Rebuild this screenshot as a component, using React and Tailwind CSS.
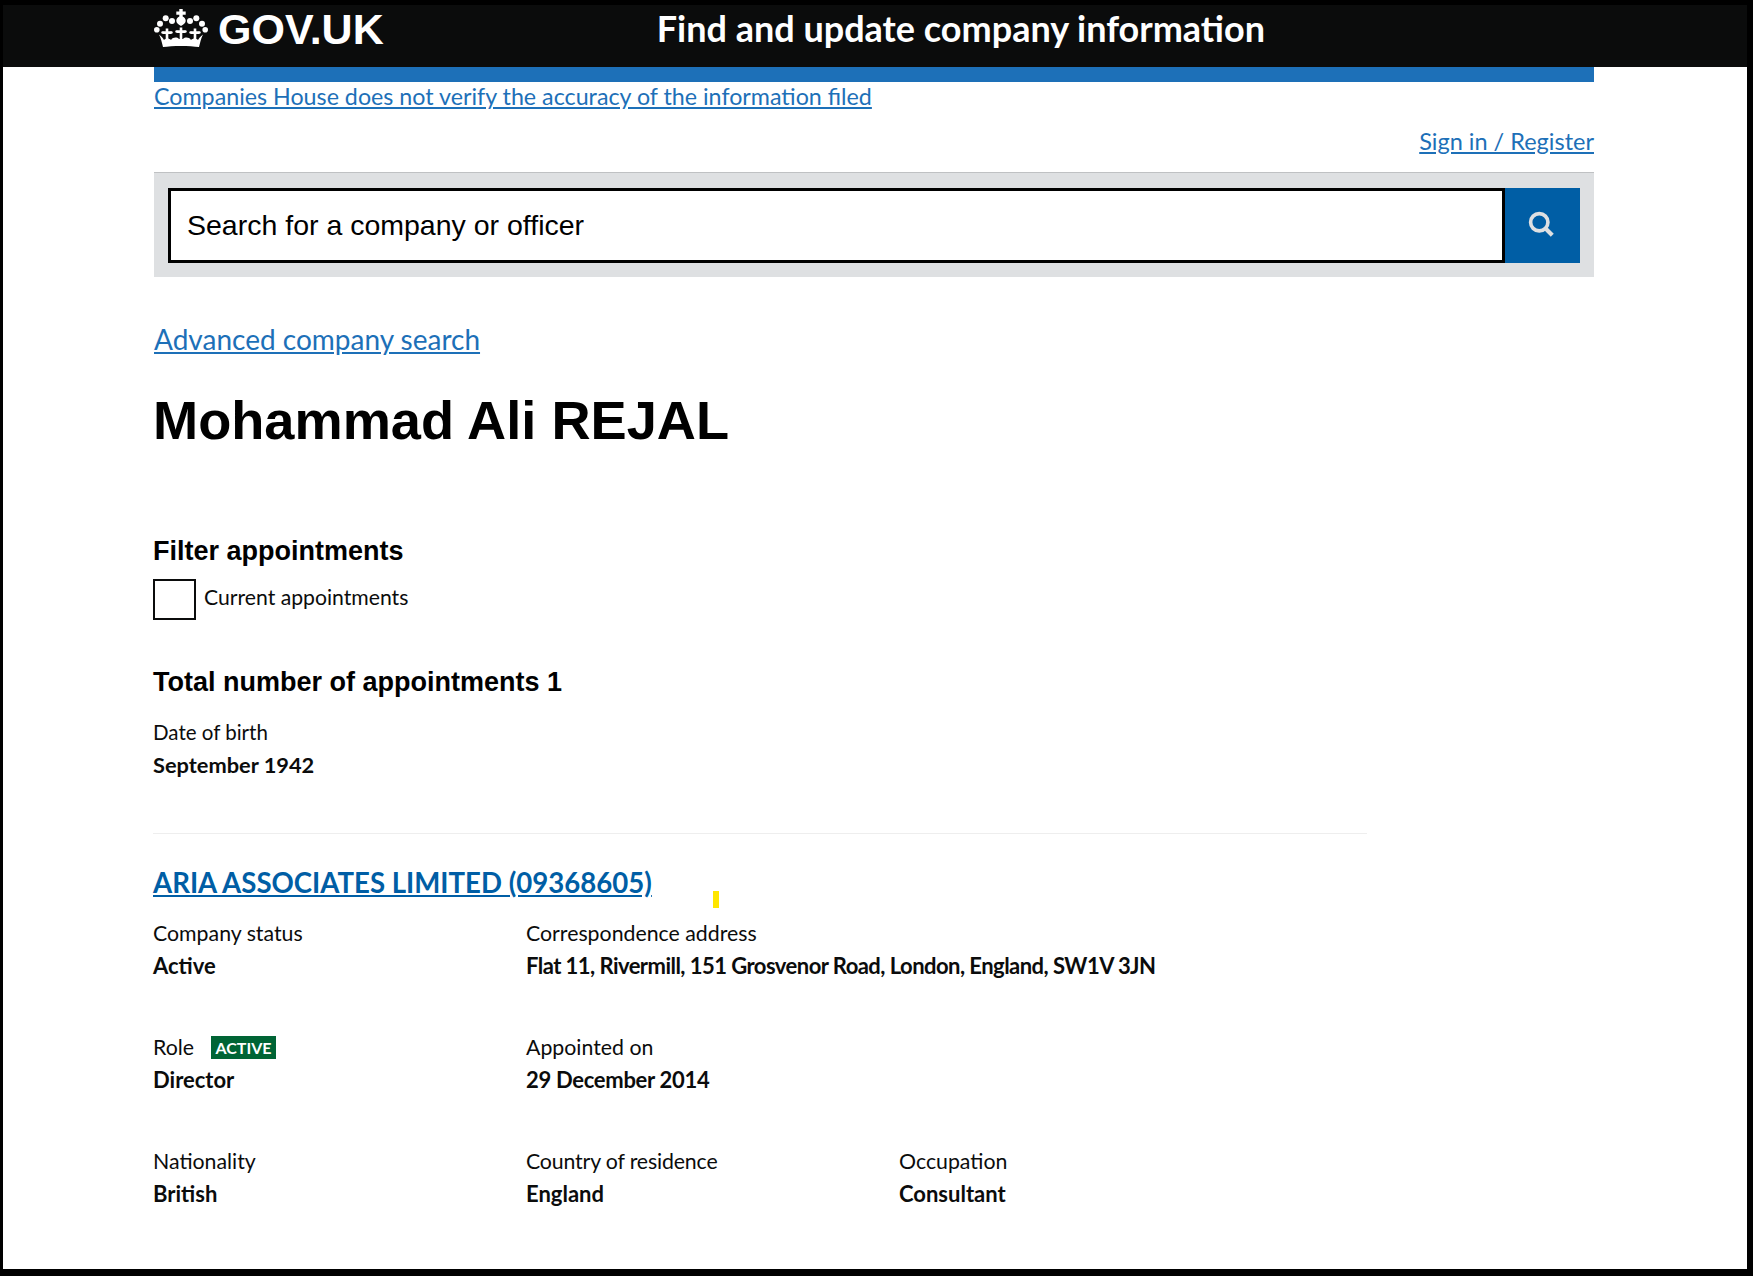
const body = { fontFamily: '"Lato", "Noto Sans", sans-serif' };
const arial = { fontFamily: '"Liberation Sans", Arial, sans-serif' };

function Fleur({ x, y }) {
  return (
    <g transform={`translate(${x} ${y})`}>
      <path d="M-1.300 -4.500h2.600v2.800h3v2.600h-3v7h-2.600v-7h-3v-2.600h3z" />
      <circle cx="-4.500" cy="-0.500" r="1.200" />
      <circle cx="4.500" cy="-0.500" r="1.200" />
    </g>
  );
}

function Crown() {
  return (
    <svg width="54" height="38" viewBox="0 0 54 38" fill="white" aria-hidden="true" className="shrink-0">
      <path d="M25.300 0h3.400v2.500h3v3.200h-3v1.800c1.800 .9 3 2.400 3 4.200 0 2-1.800 3.800-4.700 5.300-2.900-1.500-4.700-3.300-4.700-5.300 0-1.800 1.200-3.300 3-4.200V5.700h-3V2.500h3z" />
      <circle cx="18" cy="12" r="3" />
      <circle cx="36" cy="12" r="3" />
      <circle cx="11.700" cy="9.300" r="3" />
      <circle cx="42.300" cy="9.300" r="3" />
      <circle cx="6" cy="14.700" r="3" />
      <circle cx="48" cy="14.700" r="3" />
      <circle cx="2.800" cy="20.700" r="2.800" />
      <circle cx="51.200" cy="20.700" r="2.800" />
      <Fleur x={13} y={24} />
      <Fleur x={27} y={23} />
      <Fleur x={41} y={24} />
      <path d="M5 25.500C7 27 9 29 10 31c2-2 5-2 7 0 2-3 6-3 8-1h4c2-2 6-2 8 1 2-2 5-2 7 0 1-2 3-4 5-5.500-2 4-3 8.500-4 12.500-9-1.500-27-1.500-36 0-1-4-2-8.500-4-12.500z" />
    </svg>
  );
}

function Field({ label, value, labelClass = "", valueClass = "", children }) {
  return (
    <div>
      <div className={"flex items-center h-[32px] text-[21.3px] leading-[31px] text-[#0b0c0c] " + labelClass}>
        <span>{label}</span>
        {children}
      </div>
      <div className={"h-[32px] text-[22px] leading-[34px] font-bold text-[#0b0c0c] whitespace-nowrap " + valueClass}>{value}</div>
    </div>
  );
}

export default function App() {
  return (
    <div className="w-[1753px] h-[1276px] bg-white border-black border-t-[5px] border-l-[3px] border-r-[6px] border-b-[7px] overflow-hidden" style={body}>
      <header className="h-[62px] bg-[#0b0c0c] flex items-start pl-[151px] text-white">
        <div className="mt-[4px]"><Crown /></div>
        <span className="ml-[10px] -mt-[1px] text-[43px] leading-[50px] font-bold whitespace-nowrap" style={arial}>GOV.UK</span>
        <span className="ml-[273px] mt-[2px] text-[36px] leading-[42px] font-bold whitespace-nowrap">Find and update company information</span>
      </header>

      <main className="ml-[151px] w-[1440px]">
        <div className="h-[15px] bg-[#1d70b8]"></div>
        <div className="h-[30px] text-[23.25px] leading-[29px]">
          <a href="#" className="text-[#1d70b8] underline">Companies House does not verify the accuracy of the information filed</a>
        </div>
        <div className="mt-[15px] h-[30px] text-[23.5px] leading-[29px] text-right">
          <a href="#" className="text-[#1d70b8] underline">Sign in / Register</a>
        </div>
        <div className="mt-[15px] h-[105px] bg-[#dee0e2] border-t border-[#bfc1c3] px-[14px] pt-[15px] flex">
          <div className="flex-1 h-[75px] bg-white border-[3px] border-black pl-[16px] pb-[1px] flex items-center text-[28.5px] text-black" style={arial}>Search for a company or officer</div>
          <div className="w-[75px] h-[75px] bg-[#005ea5] flex items-center justify-center">
            <svg width="26" height="26" viewBox="0 0 30 30" fill="none" stroke="#dee0e2" aria-hidden="true" className="-mt-[3px] -ml-[3px]">
              <circle cx="13" cy="13" r="10" strokeWidth="4.200" />
              <path d="M20 20L28 28" strokeWidth="4.800" />
            </svg>
          </div>
        </div>

        <div className="mt-[43px] h-[40px] text-[28px] leading-[38px]">
          <a href="#" className="text-[#1d70b8] underline">Advanced company search</a>
        </div>
        <h1 className="mt-[31px] h-[60px] text-[54.2px] leading-[58px] font-bold text-black -ml-[1px]" style={arial}>Mohammad Ali REJAL</h1>

        <h2 className="mt-[85px] h-[30px] text-[27px] leading-[30px] font-bold text-black -ml-[1px]" style={arial}>Filter appointments</h2>
        <label className="mt-[13px] h-[41px] flex items-center">
          <span className="w-[43px] h-[41px] border-[2px] border-[#0b0c0c] -ml-[1px] bg-white"></span>
          <span className="ml-[8px] text-[21.2px] leading-[32px] text-[#0b0c0c] -mt-[6px]">Current appointments</span>
        </label>
        <h2 className="mt-[47px] h-[30px] text-[27px] leading-[30px] font-bold text-black -ml-[1px]" style={arial}>Total number of appointments 1</h2>

        <div className="-ml-[1px]">
          <div className="mt-[20px] h-[32px] text-[20.5px] leading-[31px] text-[#0b0c0c]">Date of birth</div>
          <div className="h-[32px] text-[21.8px] leading-[32px] font-bold text-[#0b0c0c]">September 1942</div>
          <div className="mt-[52px] mb-[1px] w-[1214px] h-px bg-[#eeeeee]"></div>
          <div className="relative mt-[30px] h-[36px] text-[27.6px] leading-[37px] font-bold">
            <a href="#" className="text-[#005ea5] underline">ARIA ASSOCIATES LIMITED (09368605)</a>
            <span className="absolute left-[560px] top-[27px] w-[6px] h-[17px] bg-[#ffe600]"></span>
          </div>
          <div className="mt-[17px] grid grid-cols-[373px_373px_1fr] gap-y-[50px]">
            <Field label="Company status" value="Active" />
            <div className="col-span-2"><Field label="Correspondence address" value="Flat 11, Rivermill, 151 Grosvenor Road, London, England, SW1V 3JN" valueClass="tracking-[-0.54px]" /></div>
            <Field label="Role" value="Director">
              <span className="ml-[17px] w-[65px] h-[23px] bg-[#006435] text-white text-[16px] leading-[23px] font-bold text-center">ACTIVE</span>
            </Field>
            <div className="col-span-2"><Field label="Appointed on" value="29 December 2014" valueClass="tracking-[-0.3px]" /></div>
            <Field label="Nationality" value="British" />
            <Field label="Country of residence" value="England" labelClass="tracking-[-0.15px]" />
            <Field label="Occupation" value="Consultant" />
          </div>
        </div>
      </main>
    </div>
  );
}
